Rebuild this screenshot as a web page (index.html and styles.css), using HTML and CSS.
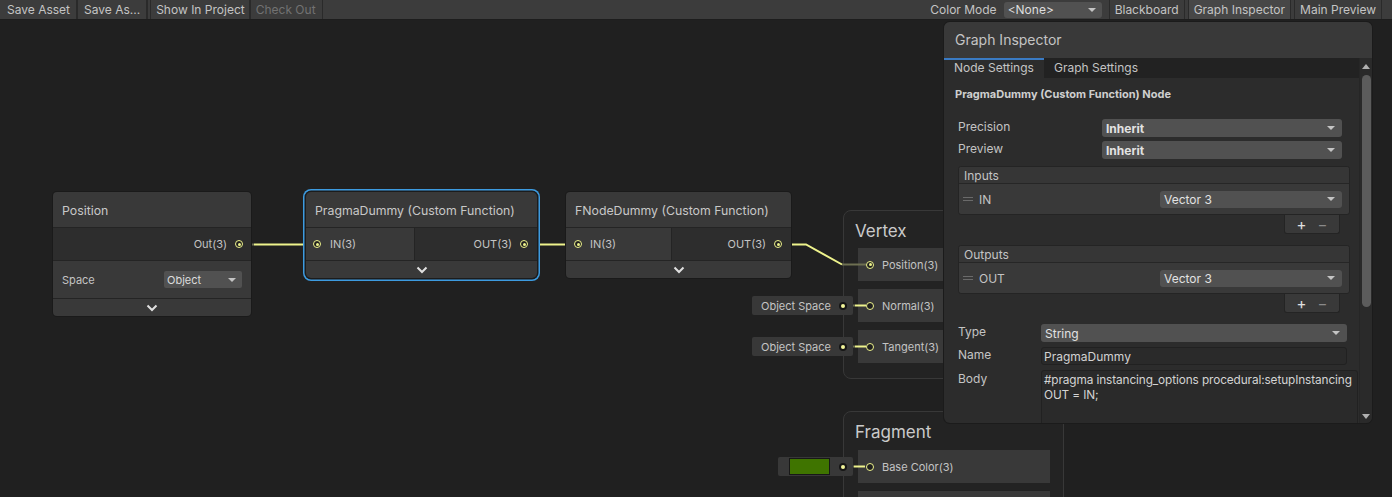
FILE: index.html
```html
<!DOCTYPE html>
<html>
<head>
<meta charset="utf-8">
<link rel="stylesheet" href="styles.css">
</head>
<body>
<div class="toolbar">
  <div class="tb-group">
    <div class="tb-btn first">Save Asset</div>
    <div class="tb-btn">Save As...</div>
    <div class="tb-btn spaced">Show In Project</div>
    <div class="tb-btn disabled">Check Out</div>
  </div>
  <div class="tb-group right">
    <span class="tb-label">Color Mode</span>
    <div class="tb-dropdown"><span>&lt;None&gt;</span><i class="tri"></i></div>
    <div class="tb-btn sep lead">Blackboard</div>
    <div class="tb-btn sep active">Graph Inspector</div>
    <div class="tb-btn sep">Main Preview</div>
  </div>
</div>

<div class="canvas">
  <svg class="wires" width="1392" height="477" viewBox="0 0 1392 477">
    <g stroke-width="2" fill="none">
      <line x1="243" y1="224.5" x2="254" y2="224.5" stroke="#6e7052"/>
      <line x1="254" y1="224.5" x2="303" y2="224.5" stroke="#eef38c"/>
      <line x1="303" y1="224.5" x2="313" y2="224.5" stroke="#6e7052"/>

      <line x1="528" y1="224.5" x2="537" y2="224.5" stroke="#6e7052"/>
      <line x1="537" y1="224.5" x2="565" y2="224.5" stroke="#eef38c"/>
      <line x1="565" y1="224.5" x2="574" y2="224.5" stroke="#6e7052"/>

      <line x1="782" y1="224.5" x2="792" y2="224.5" stroke="#6e7052"/>
      <polyline points="792,224.5 806,224.5 842,244.5" stroke="#eef38c"/>
      <line x1="842" y1="244.5" x2="866" y2="244.5" stroke="#6e7052"/>

      <line x1="847" y1="285.5" x2="855" y2="285.5" stroke="#6e7052"/>
      <line x1="855" y1="285.5" x2="866" y2="285.5" stroke="#eef38c"/>
      <line x1="847" y1="326.5" x2="855" y2="326.5" stroke="#6e7052"/>
      <line x1="855" y1="326.5" x2="866" y2="326.5" stroke="#eef38c"/>
      <line x1="847" y1="446.5" x2="854" y2="446.5" stroke="#6e7052"/>
      <line x1="854" y1="446.5" x2="865" y2="446.5" stroke="#eef38c"/>
    </g>
  </svg>

  <!-- Position node -->
  <div class="node n-position">
    <div class="node-title">Position</div>
    <div class="ports single">
      <div class="pcol out"><span class="plabel">Out(3)</span><span class="port on"></span></div>
    </div>
    <div class="node-field">
      <span class="flabel">Space</span>
      <div class="ndd"><span>Object</span><i class="tri"></i></div>
    </div>
    <div class="collapse"><svg width="12" height="8" viewBox="0 0 12 8"><path d="M1.5 1.5 L6 6 L10.5 1.5" fill="none" stroke="#e0e0e0" stroke-width="2"/></svg></div>
  </div>

  <!-- PragmaDummy node (selected) -->
  <div class="node n-pragma selected">
    <div class="node-title">PragmaDummy (Custom Function)</div>
    <div class="ports">
      <div class="pcol in"><span class="port on"></span><span class="plabel">IN(3)</span></div>
      <div class="pcol out"><span class="plabel">OUT(3)</span><span class="port on"></span></div>
    </div>
    <div class="collapse"><svg width="12" height="8" viewBox="0 0 12 8"><path d="M1.5 1.5 L6 6 L10.5 1.5" fill="none" stroke="#e0e0e0" stroke-width="2"/></svg></div>
  </div>

  <!-- FNodeDummy node -->
  <div class="node n-fnode">
    <div class="node-title">FNodeDummy (Custom Function)</div>
    <div class="ports">
      <div class="pcol in"><span class="port on"></span><span class="plabel">IN(3)</span></div>
      <div class="pcol out"><span class="plabel">OUT(3)</span><span class="port on"></span></div>
    </div>
    <div class="collapse"><svg width="12" height="8" viewBox="0 0 12 8"><path d="M1.5 1.5 L6 6 L10.5 1.5" fill="none" stroke="#e0e0e0" stroke-width="2"/></svg></div>
  </div>

  <!-- Vertex context -->
  <div class="context c-vertex">
    <div class="ctx-title">Vertex</div>
    <div class="block"><span class="port on"></span><span class="plabel">Position(3)</span></div>
    <div class="block"><span class="port"></span><span class="plabel">Normal(3)</span></div>
    <div class="block"><span class="port"></span><span class="plabel">Tangent(3)</span></div>
  </div>

  <!-- Fragment context -->
  <div class="context c-fragment">
    <div class="ctx-title">Fragment</div>
    <div class="block"><span class="port"></span><span class="plabel">Base Color(3)</span></div>
    <div class="block"></div>
  </div>

  <!-- inline controls -->
  <div class="inline i-normal"><span class="itext">Object Space</span><span class="idot"></span></div>
  <div class="inline i-tangent"><span class="itext">Object Space</span><span class="idot"></span></div>
  <div class="inline i-color"><span class="swatch"></span><span class="idot"></span></div>

  <!-- Graph Inspector -->
  <div class="inspector">
    <div class="insp-title">Graph Inspector</div>
    <div class="insp-body">
      <div class="insp-main">
        <div class="tabs">
          <div class="tab active">Node Settings</div>
          <div class="tab">Graph Settings</div>
        </div>
        <div class="panel">
          <div class="heading">PragmaDummy (Custom Function) Node</div>
          <div class="field first">
            <span class="label">Precision</span>
            <div class="dd bold"><span>Inherit</span><i class="tri"></i></div>
          </div>
          <div class="field">
            <span class="label">Preview</span>
            <div class="dd bold"><span>Inherit</span><i class="tri"></i></div>
          </div>

          <div class="list">
            <div class="list-head">Inputs</div>
            <div class="list-row">
              <span class="handle"></span><span class="item">IN</span>
              <div class="dd small"><span>Vector 3</span><i class="tri"></i></div>
            </div>
          </div>
          <div class="list-foot"><span class="plus">+</span><span class="minus">−</span></div>

          <div class="list second">
            <div class="list-head">Outputs</div>
            <div class="list-row">
              <span class="handle"></span><span class="item">OUT</span>
              <div class="dd small"><span>Vector 3</span><i class="tri"></i></div>
            </div>
          </div>
          <div class="list-foot"><span class="plus">+</span><span class="minus">−</span></div>

          <div class="field narrow type">
            <span class="label">Type</span>
            <div class="dd"><span>String</span><i class="tri"></i></div>
          </div>
          <div class="field narrow name">
            <span class="label">Name</span>
            <div class="textfield">PragmaDummy</div>
          </div>
          <div class="field narrow body-field">
            <span class="label">Body</span>
            <div class="textarea">#pragma instancing_options procedural:setupInstancing<br>OUT = IN;</div>
          </div>
        </div>
      </div>
      <div class="scrollbar">
        <i class="arrow up"></i>
        <div class="thumb"></div>
        <i class="arrow down"></i>
      </div>
    </div>
  </div>
</div>
</body>
</html>
```

FILE: styles.css
```css
* { box-sizing: border-box; }
html, body { margin: 0; padding: 0; }
body {
  width: 1392px;
  height: 497px;
  overflow: hidden;
  background: #202020;
  font-family: Inter, "Noto Sans", "Liberation Sans", sans-serif;
  color: #c4c4c4;
}

/* ---------- toolbar ---------- */
.toolbar {
  display: flex;
  justify-content: space-between;
  height: 20px;
  background: #3c3c3c;
  border-bottom: 1px solid #1d1d1d;
  font-size: 12px;
}
.tb-group { display: flex; align-items: stretch; }
.tb-group.right { padding-right: 10px; align-items: center; }
.tb-btn {
  display: flex;
  align-items: center;
  height: 19px;
  padding: 0 6px;
  border-right: 2px solid #2a2a2a;
  background: #3c3c3c;
}
.tb-btn.first { padding-left: 7px; }
.tb-btn.spaced { margin-left: 2px; border-left: 1px solid #2a2a2a; padding-left: 5px; padding-right: 4px; }
.tb-btn.disabled { color: #727272; border-right-width: 1px; padding-left: 5px; }
.tb-btn.sep { border-left: 1px solid #2a2a2a; border-right: 1px solid #2a2a2a; margin-left: 3px; padding: 0 5px; }
.tb-btn.lead { margin-left: 7px; }
.tb-btn.active { background: #474747; }
.tb-label { margin-right: 7px; }
.tb-dropdown {
  display: flex;
  align-items: center;
  justify-content: space-between;
  width: 98px;
  height: 16px;
  padding: 0 6px 0 4px;
  background: #515151;
  border-radius: 3px;
  color: #dedede;
}

.tri {
  display: inline-block;
  width: 0;
  height: 0;
  border-left: 4px solid transparent;
  border-right: 4px solid transparent;
  border-top: 4px solid #c4c4c4;
}

/* ---------- canvas ---------- */
.canvas {
  position: relative;
  height: 477px;
  overflow: hidden;
  background: #202020;
}
.wires { position: absolute; left: 0; top: 0; z-index: 2; pointer-events: none; }

.node {
  position: absolute;
  background: #393939;
  border-radius: 4px;
  box-shadow: 0 0 0 1px #1a1a1a;
  z-index: 3;
}
.n-position { left: 53px; top: 172px; width: 198px; }
.n-pragma { left: 306px; top: 172px; width: 231px; }
.n-fnode { left: 566px; top: 172px; width: 225px; }
.node.selected { box-shadow: 0 0 0 1.5px #1c1c1c, 0 0 0 3px #3d9be0; border-radius: 5px; }

.node-title {
  display: flex;
  align-items: center;
  height: 36px;
  padding-left: 9px;
  padding-top: 1px;
  font-size: 12.3px;
  color: #c8c8c8;
  border-bottom: 1px solid #242424;
  border-radius: 4px 4px 0 0;
}
.ports {
  display: flex;
  height: 33px;
  border-bottom: 1px solid #242424;
}
.pcol {
  display: flex;
  align-items: center;
  gap: 8px;
  font-size: 11px;
}
.pcol.in { background: #393939; border-right: 1px solid #242424; padding-left: 7px; }
.pcol.out { flex: 1; justify-content: flex-end; background: #2d2d2d; padding-right: 9px; }
.n-pragma .pcol.in { width: 109px; }
.n-pragma .pcol.in .plabel { margin-left: 1px; }
.n-fnode .pcol.in { width: 106px; padding-left: 8px; }
.n-position .pcol.out { padding-right: 8px; }
.plabel { font-size: 11px; color: #c4c4c4; }

.port {
  display: flex;
  align-items: center;
  justify-content: center;
  width: 8px;
  height: 8px;
  border-radius: 50%;
  border: 1.5px solid #eef38c;
  background: #1f1f1f;
  flex: none;
}
.port.on::after {
  content: "";
  width: 3px;
  height: 3px;
  border-radius: 50%;
  background: #eef38c;
}

.node-field {
  display: flex;
  align-items: center;
  justify-content: space-between;
  height: 38px;
  padding: 0 9px;
  border-bottom: 1px solid #242424;
  font-size: 11px;
}
.ndd {
  display: flex;
  align-items: center;
  justify-content: space-between;
  width: 78px;
  height: 17px;
  padding: 0 6px 0 3px;
  background: #515151;
  border-radius: 2px;
  font-size: 11px;
  color: #dcdcdc;
}
.collapse {
  display: flex;
  align-items: center;
  justify-content: center;
  height: 17px;
  border-radius: 0 0 4px 4px;
}

/* ---------- contexts ---------- */
.context {
  position: absolute;
  left: 843px;
  width: 221px;
  background: #232323;
  border: 1px solid #383838;
  border-radius: 8px;
  z-index: 1;
}
.c-vertex { top: 190px; height: 169px; }
.c-fragment { top: 391px; height: 140px; }
.ctx-title {
  display: flex;
  align-items: center;
  height: 37px;
  padding-left: 11px;
  padding-top: 3px;
  font-size: 17px;
  color: #cacaca;
}
.c-fragment .ctx-title { height: 38px; padding-top: 2px; }
.block {
  display: flex;
  align-items: center;
  gap: 8px;
  width: 192px;
  height: 33px;
  margin: 0 0 8px 14px;
  padding-left: 8px;
  background: #393939;
}

.inline {
  position: absolute;
  display: flex;
  align-items: center;
  justify-content: space-between;
  height: 19px;
  background: #383838;
  border-radius: 2px;
  padding: 0 6px 0 9px;
  z-index: 3;
}
.i-normal { left: 752px; top: 276px; width: 101px; }
.i-tangent { left: 752px; top: 317px; width: 101px; }
.i-color { left: 778px; top: 437px; width: 75px; padding-left: 11px; }
.itext { font-size: 11px; color: #c4c4c4; }
.idot {
  display: flex;
  align-items: center;
  justify-content: center;
  width: 8px;
  height: 8px;
  border-radius: 50%;
  background: #161616;
}
.idot::after {
  content: "";
  width: 4px;
  height: 4px;
  border-radius: 50%;
  background: #f2f59a;
}
.swatch {
  width: 41px;
  height: 17px;
  background: #3f7400;
  border: 1px solid #181818;
}

/* ---------- inspector ---------- */
.inspector {
  position: absolute;
  left: 944px;
  top: 2px;
  width: 428px;
  height: 401px;
  background: #2c2c2c;
  border-radius: 6px;
  box-shadow: 0 0 0 1px #1b1b1b;
  overflow: hidden;
  z-index: 5;
}
.insp-title {
  display: flex;
  align-items: center;
  height: 36px;
  padding-left: 11px;
  padding-bottom: 2px;
  background: #393939;
  font-size: 14px;
  color: #c4c4c4;
}
.insp-body { display: flex; height: 365px; }
.insp-main { flex: 1; overflow: hidden; }
.scrollbar {
  display: flex;
  flex-direction: column;
  align-items: center;
  width: 13px;
  background: #2a2a2a;
  border-left: 1px solid #262626;
}
.arrow {
  display: block;
  width: 0;
  height: 0;
  border-left: 4px solid transparent;
  border-right: 4px solid transparent;
}
.arrow.up { border-bottom: 5px solid #b0b0b0; margin-top: 6px; }
.arrow.down { border-top: 5px solid #b0b0b0; margin-top: auto; margin-bottom: 4px; }
.thumb {
  width: 9px;
  height: 232px;
  margin-top: 6px;
  border-radius: 5px;
  background: #5c5c5c;
}

.tabs {
  display: flex;
  height: 20px;
  background: #222222;
  font-size: 12px;
}
.tab { display: flex; align-items: center; padding: 0 10px 1px; color: #c4c4c4; }
.tab.active { width: 100px; background: #2c2c2c; box-shadow: inset 0 2px 0 #3a7bc4; }

.panel { padding-bottom: 20px; }
.heading {
  margin: 9px 0 0 11px;
  height: 14px;
  font-size: 11px;
  font-weight: 700;
  color: #cfcfcf;
}
.field {
  display: flex;
  align-items: center;
  height: 18px;
  margin: 4px 17px 0 14px;
  font-size: 12px;
}
.field.first { margin-top: 18px; }
.field .label { width: 144px; flex: none; color: #c4c4c4; padding-bottom: 3px; }
.field.narrow { margin-right: 12px; }
.field.narrow .label { width: 83px; }
.field.type { margin-top: 11px; }
.field.name { margin-top: 5px; }
.field.body-field { margin-top: 5px; margin-right: 1px; align-items: flex-start; height: 60px; }
.field.body-field .label { padding-top: 1px; }

.dd {
  display: flex;
  align-items: center;
  justify-content: space-between;
  flex: 1;
  height: 18px;
  padding: 0 7px 0 4px;
  background: #515151;
  border-radius: 3px;
  color: #e2e2e2;
  font-size: 12px;
}
.dd.bold { font-weight: 700; }
.dd.small { flex: none; width: 182px; height: 17px; margin-left: auto; margin-right: 7px; padding-left: 4px; }

.textfield {
  flex: 1;
  height: 18px;
  display: flex;
  align-items: center;
  padding-left: 2px;
  background: #2a2a2a;
  border: 1px solid #212121;
  border-radius: 3px;
  color: #d2d2d2;
}
.textarea {
  flex: 1;
  height: 60px;
  padding: 2px 2px;
  background: #2a2a2a;
  border: 1px solid #212121;
  border-radius: 3px;
  color: #d4d4d4;
  font-size: 11.8px;
  letter-spacing: -0.1px;
  line-height: 15px;
  white-space: nowrap;
}

.list {
  margin: 7px 9px 0 14px;
  border: 1px solid #242424;
  border-radius: 3px;
  background: #393939;
  font-size: 12px;
}
.list.second { margin-top: 11px; }
.list-head {
  display: flex;
  align-items: center;
  height: 17px;
  padding-left: 5px;
  background: #363636;
  border-bottom: 1px solid #262626;
  border-radius: 3px 3px 0 0;
}
.list-row {
  display: flex;
  align-items: center;
  height: 30px;
  padding-left: 4px;
}
.handle {
  width: 10px;
  height: 4px;
  border-top: 1px solid #6a6a6a;
  border-bottom: 1px solid #6a6a6a;
}
.item { margin-left: 6px; color: #c4c4c4; }
.list-foot {
  display: flex;
  align-items: center;
  justify-content: space-around;
  width: 56px;
  height: 19px;
  margin: 0 19px 0 auto;
  padding: 0 6px;
  background: #393939;
  border: 1px solid #242424;
  border-top: none;
  border-radius: 0 0 3px 3px;
  font-size: 15px;
}
.plus { color: #e0e0e0; }
.minus { color: #8a8a8a; }
```
